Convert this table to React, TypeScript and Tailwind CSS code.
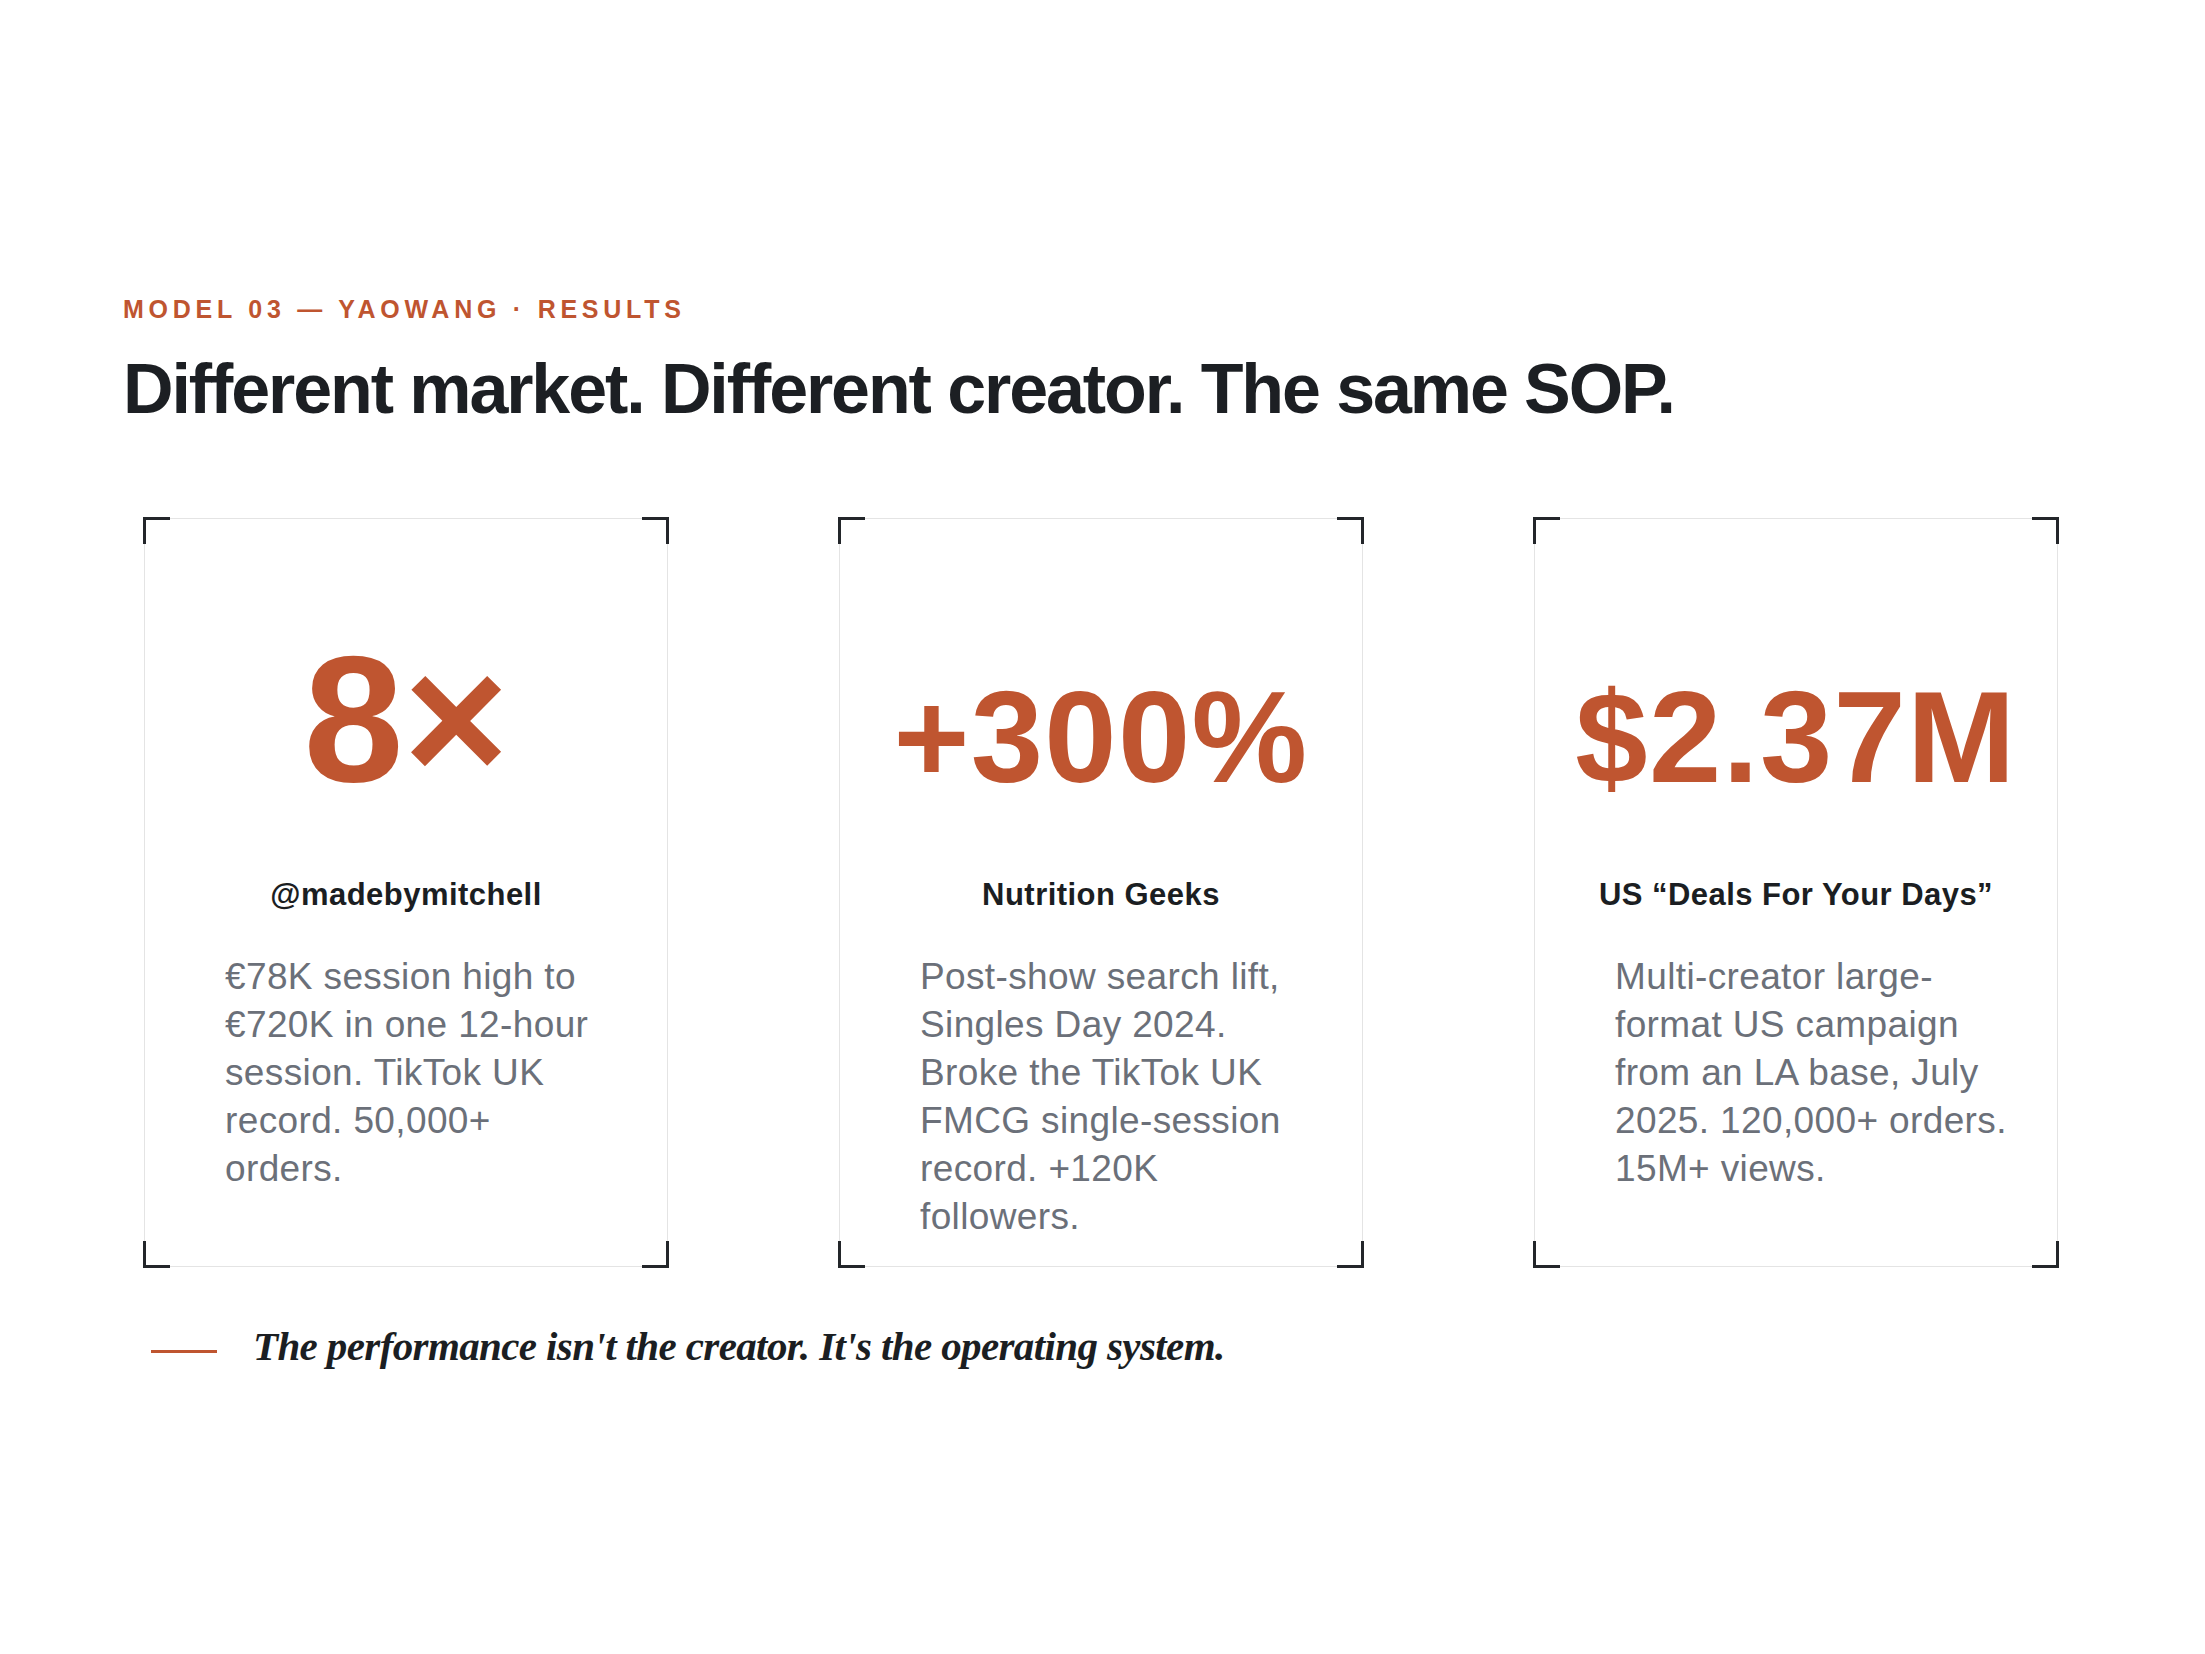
import React from 'react';

type Stat = {
  value: string;
  valueClass: string;
  name: string;
  lines: string[];
};

const stats: Stat[] = [
  {
    value: '8×',
    valueClass: 'text-[180px]',
    name: '@madebymitchell',
    lines: ['€78K session high to', '€720K in one 12-hour', 'session. TikTok UK', 'record. 50,000+', 'orders.'],
  },
  {
    value: '+300%',
    valueClass: 'text-[130px] mb-[7px] tracking-[0.01em]',
    name: 'Nutrition Geeks',
    lines: [
      'Post-show search lift,',
      'Singles Day 2024.',
      'Broke the TikTok UK',
      'FMCG single-session',
      'record. +120K',
      'followers.',
    ],
  },
  {
    value: '$2.37M',
    valueClass: 'text-[130px] mb-[7px] tracking-[0.01em]',
    name: 'US “Deals For Your Days”',
    lines: ['Multi-creator large-', 'format US campaign', 'from an LA base, July', '2025. 120,000+ orders.', '15M+ views.'],
  },
];

function Corners() {
  const base = 'absolute w-[27px] h-[27px] border-[#23262a]';
  return (
    <>
      <div className={`${base} -top-[2px] -left-[2px] border-t-[3px] border-l-[3px]`} />
      <div className={`${base} -top-[2px] -right-[2px] border-t-[3px] border-r-[3px]`} />
      <div className={`${base} -bottom-[2px] -left-[2px] border-b-[3px] border-l-[3px]`} />
      <div className={`${base} -bottom-[2px] -right-[2px] border-b-[3px] border-r-[3px]`} />
    </>
  );
}

function StatCard({ stat }: { stat: Stat }) {
  return (
    <div className="relative h-[749px] border border-[#e4e4e4] bg-white">
      <Corners />
      {/* big number */}
      <div className="flex h-[290px] items-end justify-center">
        <span className={`${stat.valueClass} font-bold leading-none text-[#bf5530]`}>{stat.value}</span>
      </div>
      <p className="mt-[71px] text-center text-[31px] font-bold leading-[30px] tracking-[0.015em] text-[#1b1e22]">
        {stat.name}
      </p>
      <div className="mt-[43px] pl-[80px] text-[37px] leading-[48px] tracking-[0.01em] text-[#6b7079]">
        {stat.lines.map(line => (
          <span key={line} className="block whitespace-nowrap">
            {line}
          </span>
        ))}
      </div>
    </div>
  );
}

export default function App() {
  return (
    <div className="min-h-screen w-full bg-white font-['Liberation_Sans',Arial,sans-serif]">
      <div className="pl-[123px] pt-[297px]">
        <p className="text-[25px] font-semibold leading-[25px] tracking-[0.19em] text-[#bf5530]">
          MODEL 03 — YAOWANG · RESULTS
        </p>
        <h1 className="mt-[32px] text-[70px] font-bold leading-[70px] tracking-[-0.03em] text-[#1c1f23]">
          Different market. Different creator. The same SOP.
        </h1>

        <div className="ml-[21px] mt-[94px] grid grid-cols-[524px_524px_524px] gap-x-[171px]">
          {stats.map(stat => (
            <StatCard key={stat.name} stat={stat} />
          ))}
        </div>

        {/* closing line */}
        <div className="mt-[59px] flex items-center">
          <div className="ml-[28px] mt-[9px] h-[3px] w-[66px] bg-[#bf5530]" />
          <p className="ml-[36px] font-['Liberation_Serif',Georgia,serif] text-[41px] font-semibold italic leading-[41px] tracking-[-0.015em] text-[#1b1e22]">
            The performance isn't the creator. It's the operating system.
          </p>
        </div>
      </div>
    </div>
  );
}
